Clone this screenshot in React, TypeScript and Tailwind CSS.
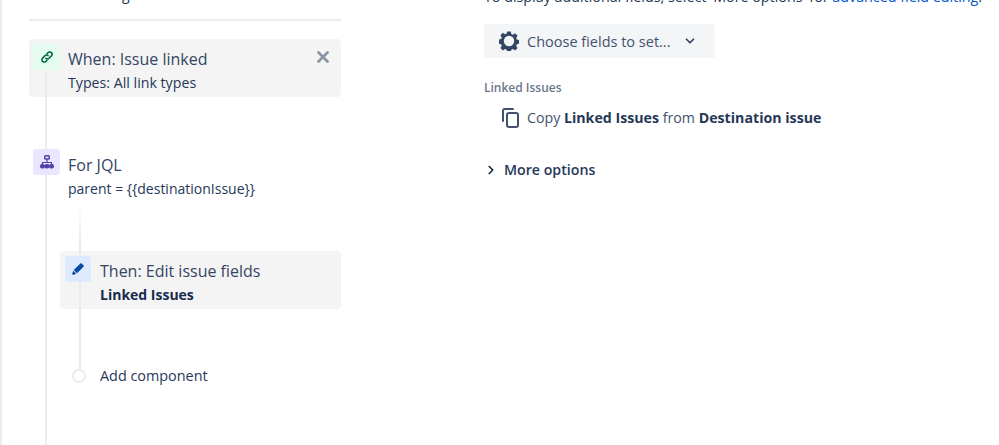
import React from 'react';
import { ChevronDown, ChevronRight } from 'lucide-react';

const font = "font-['Open_Sans','Noto_Sans',sans-serif]";

const App: React.FC = () => {
  return (
    <div className={`relative flex h-[445px] w-[999px] overflow-hidden bg-white text-[#253858] ${font}`}>
      {/* page edge and main connector */}
      <div className="absolute left-0 top-0 h-full w-[2px] bg-[#ebecf0]" />
      <div className="absolute left-[45px] top-[70px] z-10 h-[375px] w-[2px] bg-[#ebecf0]" />
      <div className="absolute left-[79px] top-[205px] z-10 h-[165px] w-[2px] bg-gradient-to-b from-white to-[#ebecf0] to-[20%]" />

      {/* Left: rule chain */}
      <div className="ml-[29px] w-[312px] shrink-0">
        <div className="h-[21px] overflow-hidden border-b-2 border-[#ebecf0]">
          <p className="-mt-[15px] pl-[93px] text-[14px] leading-[20px]">g</p>
        </div>

        <div className="relative mt-[18px] flex h-[58px] rounded-[4px] bg-[#f4f4f4] pl-[4px] pt-[5px]">
          <div className="z-20 flex h-[26px] w-[27px] items-center justify-center rounded-[3px] bg-[#e3fcef]">
            <svg width="14" height="14" viewBox="0 0 14 14" fill="none" stroke="#006644" strokeWidth="1.500" strokeLinecap="round">
              <path d="M5.800 8.200a2.300 2.300 0 0 0 3.300 0l2.300-2.300a2.300 2.300 0 0 0-3.300-3.300L7 3.800" />
              <path d="M8.200 5.800a2.300 2.300 0 0 0-3.300 0L2.600 8.100a2.300 2.300 0 0 0 3.300 3.300L7 10.200" />
            </svg>
          </div>
          <div className="ml-[8px] pt-[4px]">
            <p className="text-[16px] leading-[22px] text-[#344563]">When: Issue linked</p>
            <p className="mt-[3px] text-[14.2px] leading-[20px]">Types: All link types</p>
          </div>
          <svg className="absolute right-[12px] top-[12px]" width="12" height="12" viewBox="0 0 12 12" stroke="#8993a4" strokeWidth="2.600" strokeLinecap="round">
            <path d="M1.500 1.500l9 9M10.500 1.500l-9 9" />
          </svg>
        </div>

        <div className="mt-[52px] flex h-[50px] pl-[4px]">
          <div className="z-20 flex h-[26px] w-[27px] items-center justify-center rounded-[3px] bg-[#eae6ff]">
            <svg width="16" height="16" viewBox="0 0 16 16" fill="none" stroke="#5243aa">
              <rect x="5.800" y="1.800" width="4.400" height="3.200" rx="0.800" strokeWidth="1.500" />
              <path d="M8 5v3M3.500 10V8.500h9V10" strokeWidth="1.200" />
              <rect x="1.500" y="10.500" width="4" height="3.500" rx="1.200" fill="#5243aa" strokeWidth="1" />
              <rect x="10.500" y="10.500" width="4" height="3.500" rx="1.200" fill="#5243aa" strokeWidth="1" />
              <rect x="6" y="10.500" width="4" height="3.500" rx="1.200" fill="#5243aa" strokeWidth="1" />
            </svg>
          </div>
          <div className="ml-[8px] pt-[5px]">
            <p className="text-[16px] leading-[22px] text-[#344563]">For JQL</p>
            <p className="mt-[3px] text-[14px] leading-[20px]">{'parent = {{destinationIssue}}'}</p>
          </div>
        </div>

        <div className="ml-[31px] mt-[52px] flex h-[58px] rounded-[4px] bg-[#f4f4f4] pl-[5px] pt-[5px]">
          <div className="z-20 flex h-[26px] w-[26px] items-center justify-center rounded-[3px] bg-[#deebff]">
            <svg width="14" height="14" viewBox="0 0 14 14" fill="#0747a6">
              <path d="M9.300 1.500a1 1 0 0 1 1.400 0l1.800 1.800a1 1 0 0 1 0 1.400L6 11.200 2.800 8z" />
              <path d="M2.200 8.700l3.100 3.100-2.700.9a1 1 0 0 1-1.300-1.300z" />
            </svg>
          </div>
          <div className="ml-[9px] pt-[4px]">
            <p className="text-[16px] leading-[22px] text-[#344563]">Then: Edit issue fields</p>
            <p className="mt-[3px] text-[14px] font-bold leading-[20px] text-[#172b4d]">Linked Issues</p>
          </div>
        </div>

        <div className="ml-[43px] mt-[57px] flex items-center">
          <div className="z-20 h-[14px] w-[14px] rounded-full border-2 border-[#ebecf0] bg-white" />
          <p className="ml-[14px] text-[14.4px] leading-[20px]">Add component</p>
        </div>
      </div>

      {/* Right: action config */}
      <div className="ml-[143px] min-w-0 flex-1">
        <div className="h-[24px] overflow-hidden">
          <p className="-mt-[13px] whitespace-nowrap text-[14.3px] leading-[20px]">
            To display additional fields, select 'More options' for <span className="text-[#0052cc]">advanced field editing</span>.
          </p>
        </div>

        <div className="flex h-[34px] w-[231px] items-center rounded-[3px] bg-[#f4f5f7] pl-[15px] text-[#42526e]">
          <svg width="20" height="20" viewBox="0 0 20 20" fill="#344563">
            <path fillRule="evenodd" d="M8.200 0.500h3.600l.5 2.500 1.700.7 2.100-1.400 2.500 2.500-1.400 2.100.7 1.700 2.500.5v3.600l-2.500.5-.7 1.700 1.400 2.100-2.500 2.500-2.100-1.400-1.700.7-.5 2.500H8.200l-.5-2.500-1.700-.7-2.100 1.400-2.500-2.500 1.400-2.100-.7-1.700-2.500-.5V8.600l2.500-.5.7-1.700-1.400-2.100 2.500-2.500L6 3.200l1.700-.7zM10 4.800a5.200 5.200 0 1 0 0 10.400 5.200 5.200 0 0 0 0-10.400z" />
          </svg>
          <span className="ml-[8px] pt-[1px] text-[14.5px]">Choose fields to set...</span>
          <ChevronDown className="ml-[12px] h-[14px] w-[14px] text-[#344563]" strokeWidth={3} />
        </div>

        <p className="mt-[22px] text-[12px] font-semibold leading-[16px] text-[#6b778c]">Linked Issues</p>

        <div className="ml-[17px] mt-[12px] flex items-center">
          <svg width="20" height="20" viewBox="0 0 20 20" fill="none" stroke="#42526e" strokeWidth="2" strokeLinecap="round" strokeLinejoin="round">
            <path d="M2 13V3a2 2 0 0 1 2-2h8" />
            <rect x="6" y="5" width="11" height="14" rx="2" />
          </svg>
          <p className="ml-[6px] text-[14.2px] leading-[20px] text-[#42526e]">
            Copy <b className="text-[#253858]">Linked Issues</b> from <b className="text-[#253858]">Destination issue</b>
          </p>
        </div>

        <div className="mt-[32px] flex items-center">
          <ChevronRight className="h-[14px] w-[14px] text-[#172b4d]" strokeWidth={3} />
          <span className="ml-[6px] text-[14.2px] font-semibold leading-[20px]">More options</span>
        </div>
      </div>
    </div>
  );
};

export default App;
